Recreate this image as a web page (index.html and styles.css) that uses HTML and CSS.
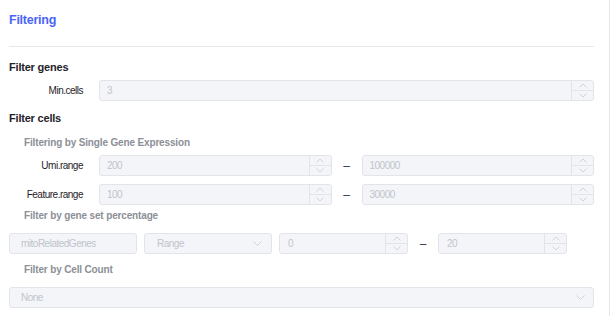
FILE: index.html
```html
<!DOCTYPE html>
<html lang="en">
  <head>
    <meta charset="UTF-8" />
    <title>Filtering</title>
    <link rel="stylesheet" href="styles.css">
  </head>
  <body>
    <div class="panel">
      <div class="header">
        <h2 class="title">Filtering</h2>
      </div>

      <h3 class="section">Filter genes</h3>
      <div class="row">
        <label class="label">Min.cells</label>
        <div class="number">
          <span class="value">3</span>
          <div class="steps">
            <span class="up"><svg width="8" height="5" viewBox="0 0 8 5"><path d="M0.5 4.5 L4 1 L7.5 4.5" /></svg></span>
            <span class="down"><svg width="8" height="5" viewBox="0 0 8 5"><path d="M0.5 0.5 L4 4 L7.5 0.5" /></svg></span>
          </div>
        </div>
      </div>

      <h3 class="section cells">Filter cells</h3>
      <h4 class="sub">Filtering by Single Gene Expression</h4>
      <div class="row range-row">
        <label class="label">Umi.range</label>
        <div class="number">
          <span class="value">200</span>
          <div class="steps">
            <span class="up"><svg width="8" height="5" viewBox="0 0 8 5"><path d="M0.5 4.5 L4 1 L7.5 4.5" /></svg></span>
            <span class="down"><svg width="8" height="5" viewBox="0 0 8 5"><path d="M0.5 0.5 L4 4 L7.5 0.5" /></svg></span>
          </div>
        </div>
        <span class="dash">–</span>
        <div class="number">
          <span class="value">100000</span>
          <div class="steps">
            <span class="up"><svg width="8" height="5" viewBox="0 0 8 5"><path d="M0.5 4.5 L4 1 L7.5 4.5" /></svg></span>
            <span class="down"><svg width="8" height="5" viewBox="0 0 8 5"><path d="M0.5 0.5 L4 4 L7.5 0.5" /></svg></span>
          </div>
        </div>
      </div>
      <div class="row range-row second">
        <label class="label">Feature.range</label>
        <div class="number">
          <span class="value">100</span>
          <div class="steps">
            <span class="up"><svg width="8" height="5" viewBox="0 0 8 5"><path d="M0.5 4.5 L4 1 L7.5 4.5" /></svg></span>
            <span class="down"><svg width="8" height="5" viewBox="0 0 8 5"><path d="M0.5 0.5 L4 4 L7.5 0.5" /></svg></span>
          </div>
        </div>
        <span class="dash">–</span>
        <div class="number">
          <span class="value">30000</span>
          <div class="steps">
            <span class="up"><svg width="8" height="5" viewBox="0 0 8 5"><path d="M0.5 4.5 L4 1 L7.5 4.5" /></svg></span>
            <span class="down"><svg width="8" height="5" viewBox="0 0 8 5"><path d="M0.5 0.5 L4 4 L7.5 0.5" /></svg></span>
          </div>
        </div>
      </div>

      <h4 class="sub gene-set">Filter by gene set percentage</h4>
      <div class="row gene-row">
        <div class="field">mitoRelatedGenes</div>
        <div class="field select">
          <span>Range</span>
          <svg width="9" height="5" viewBox="0 0 9 5"><path d="M0.5 0.5 L4.5 4.5 L8.5 0.5" /></svg>
        </div>
        <div class="number">
          <span class="value">0</span>
          <div class="steps">
            <span class="up"><svg width="8" height="5" viewBox="0 0 8 5"><path d="M0.5 4.5 L4 1 L7.5 4.5" /></svg></span>
            <span class="down"><svg width="8" height="5" viewBox="0 0 8 5"><path d="M0.5 0.5 L4 4 L7.5 0.5" /></svg></span>
          </div>
        </div>
        <span class="dash">–</span>
        <div class="number">
          <span class="value">20</span>
          <div class="steps">
            <span class="up"><svg width="8" height="5" viewBox="0 0 8 5"><path d="M0.5 4.5 L4 1 L7.5 4.5" /></svg></span>
            <span class="down"><svg width="8" height="5" viewBox="0 0 8 5"><path d="M0.5 0.5 L4 4 L7.5 0.5" /></svg></span>
          </div>
        </div>
      </div>

      <h4 class="sub cell-count">Filter by Cell Count</h4>
      <div class="row count-row">
        <div class="field select wide">
          <span>None</span>
          <svg width="9" height="5" viewBox="0 0 9 5"><path d="M0.5 0.5 L4.5 4.5 L8.5 0.5" /></svg>
        </div>
      </div>
    </div>
  </body>
</html>
```

FILE: styles.css
```css
html,
body {
  margin: 0;
  height: 100%;
}

body {
  background: #fff;
  font-family: "Liberation Sans", Arial, sans-serif;
  color: #1f2329;
}

.panel {
  box-sizing: border-box;
  width: 610px;
  height: 316px;
  padding: 0 15px 0 9px;
  border-right: 1px solid #e4e7f0;
  overflow: hidden;
}

.header {
  border-bottom: 1px solid #e8e8ea;
}

.title {
  margin: 0;
  padding: 12px 0 18px;
  font-size: 12.5px;
  line-height: 16px;
  letter-spacing: -0.25px;
  font-weight: bold;
  color: #4a65f6;
}

.section {
  margin: 12px 0 0;
  font-size: 11px;
  line-height: 16px;
  letter-spacing: -0.2px;
  font-weight: bold;
  color: #1f2329;
}

.section.cells {
  margin-top: 9px;
}

.sub {
  margin: 9px 0 0 15px;
  font-size: 10px;
  line-height: 16px;
  letter-spacing: -0.15px;
  font-weight: bold;
  color: #8c8f96;
}

.sub.gene-set {
  margin-top: 3px;
}

.sub.cell-count {
  margin-top: 8px;
}

.row {
  display: flex;
  align-items: center;
  height: 21px;
  margin-top: 5px;
}

.range-row {
  margin-top: 4px;
}

.range-row.second {
  margin-top: 8px;
}

.gene-row {
  margin-top: 9px;
  gap: 7px;
}

.count-row {
  margin-top: 9px;
}

.label {
  box-sizing: border-box;
  flex: 0 0 90px;
  padding-right: 16px;
  text-align: right;
  font-size: 10px;
  letter-spacing: -0.5px;
  color: #1f2329;
}

.number,
.field {
  box-sizing: border-box;
  display: flex;
  align-items: center;
  height: 21px;
  border: 1px solid #e2e4ea;
  border-radius: 3px;
  background: #f4f5f9;
  font-size: 10px;
  letter-spacing: -0.5px;
  color: #c0c4cc;
}

.number {
  flex: 1;
}

.value {
  flex: 1;
  padding-left: 7px;
}

.steps {
  display: flex;
  flex-direction: column;
  width: 21px;
  height: 100%;
  border-left: 1px solid #e2e4ea;
}

.steps span {
  flex: 1;
  display: flex;
  align-items: center;
  justify-content: center;
}

.steps .down {
  border-top: 1px solid #e2e4ea;
}

.steps path,
.select path {
  fill: none;
  stroke: #d0d3da;
  stroke-width: 1;
}

.dash {
  flex: 0 0 30px;
  text-align: center;
  font-size: 12px;
  color: #303a4b;
}

.gene-row .dash {
  flex-basis: 16px;
}

.gene-row .field {
  width: 128px;
  padding-left: 11px;
}

.gene-row .number {
  flex: 0 0 129px;
}

.gene-row .number .value {
  padding-left: 8px;
}

.select {
  justify-content: space-between;
  padding-right: 9px;
}

.gene-row .field.select {
  padding-left: 12px;
}

.field.wide {
  width: 100%;
  padding-left: 11px;
  padding-right: 8px;
}
```
